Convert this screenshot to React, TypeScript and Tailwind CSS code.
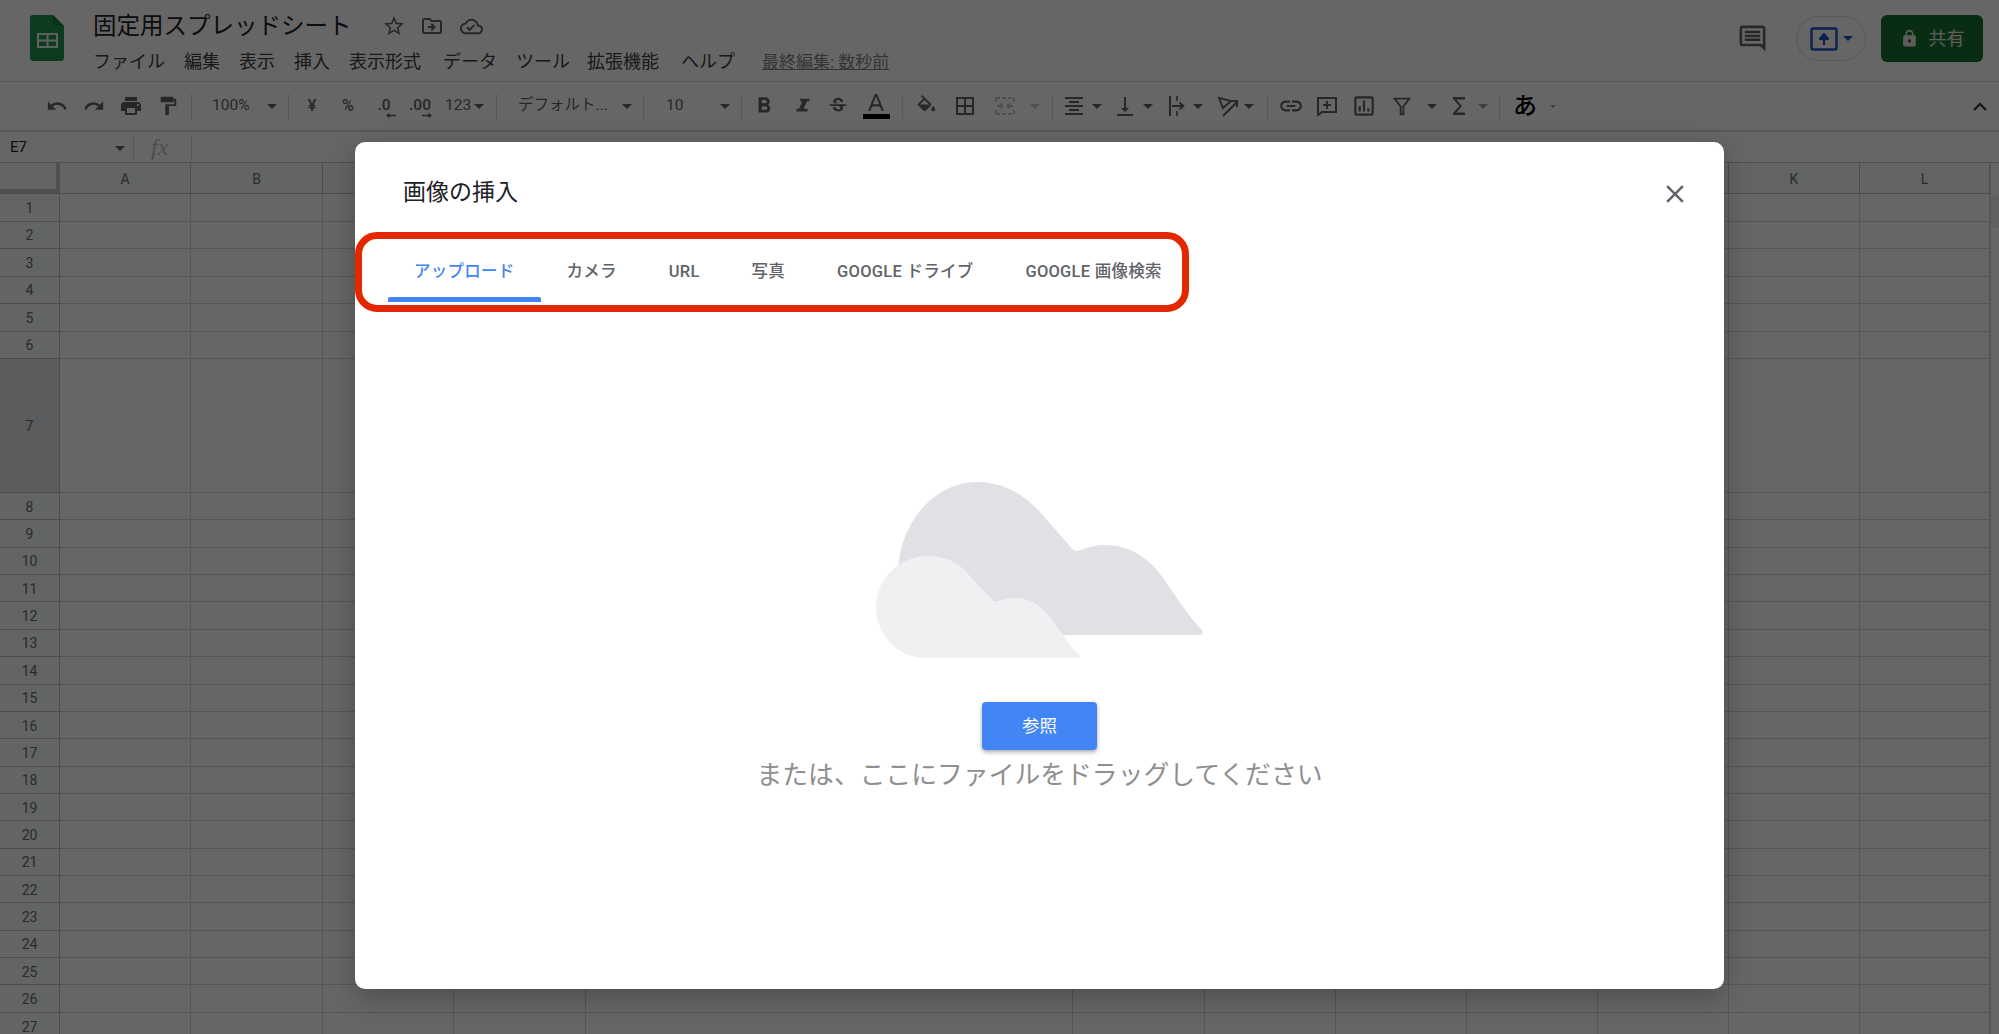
const P = {
  undo: 'M12.5 8c-2.65 0-5.05.99-6.9 2.6L2 7v9h9l-3.62-3.62c1.39-1.16 3.16-1.88 5.12-1.88 3.54 0 6.55 2.31 7.6 5.5l2.37-.78C21.08 11.03 17.15 8 12.5 8z',
  redo: 'M18.4 10.6C16.55 8.99 14.15 8 11.5 8c-4.65 0-8.58 3.03-9.96 7.22L3.9 16c1.05-3.19 4.05-5.5 7.6-5.5 1.95 0 3.73.72 5.12 1.88L13 16h9V7l-3.6 3.6z',
  print: 'M19 8H5c-1.66 0-3 1.34-3 3v6h4v4h12v-4h4v-6c0-1.66-1.34-3-3-3zm-3 11H8v-5h8v5zm3-7c-.55 0-1-.45-1-1s.45-1 1-1 1 .45 1 1-.45 1-1 1zm-1-9H6v4h12V3z',
  paint: 'M18 4V3c0-.55-.45-1-1-1H5c-.55 0-1 .45-1 1v4c0 .55.45 1 1 1h12c.55 0 1-.45 1-1V6h1v4H9v11c0 .55.45 1 1 1h2c.55 0 1-.45 1-1v-9h8V4h-3z',
  bold: 'M15.6 10.79c.97-.67 1.65-1.77 1.65-2.79 0-2.26-1.75-4-4-4H7v14h7.04c2.09 0 3.71-1.7 3.71-3.79 0-1.52-.86-2.82-2.15-3.42zM10 6.5h3c.83 0 1.5.67 1.5 1.5s-.67 1.5-1.5 1.5h-3v-3zm3.5 9H10v-3h3.5c.83 0 1.5.67 1.5 1.5s-.67 1.5-1.5 1.5z',
  italic: 'M10 4v3h2.21l-3.42 8H6v3h12v-3h-4.21l3.42-8H20V4z',
  strike: 'M6.85 7.08C6.85 4.37 9.45 3 12.24 3c1.64 0 3 .49 3.9 1.28.77.65 1.46 1.73 1.46 3.24h-3.01c0-.31-.05-.59-.15-.85-.29-.86-1.2-1.28-2.25-1.28-1.86 0-2.34 1.02-2.34 1.7 0 .48.25.88.74 1.21.38.25.77.48 1.41.7H7.39c-.21-.34-.54-.89-.54-1.92zM21 12v-2H3v2h9.62c1.15.45 1.96.75 1.96 1.97 0 1-.81 1.67-2.28 1.67-1.54 0-2.93-.54-2.93-2.51H6.4c0 .55.08 1.13.24 1.58.81 2.29 3.29 3.3 5.67 3.3 2.27 0 5.3-.89 5.3-4.05 0-.3-.01-1.16-.48-1.96H21z',
  fill: 'M16.56 8.94L7.62 0 6.21 1.41l2.38 2.38-5.15 5.15c-.59.59-.59 1.54 0 2.12l5.5 5.5c.29.29.68.44 1.06.44s.77-.15 1.06-.44l5.5-5.5c.59-.58.59-1.53 0-2.12zM5.21 10L10 5.21 14.79 10H5.21zM19 11.5s-2 2.17-2 3.5c0 1.1.9 2 2 2s2-.9 2-2c0-1.33-2-3.5-2-3.5z',
  borders: 'M3 3v18h18V3H3zm8 16H5v-6h6v6zm0-8H5V5h6v6zm8 8h-6v-6h6v6zm0-8h-6V5h6v6z',
  align: 'M7 15v2h10v-2H7zm-4 6h18v-2H3v2zm0-8h18v-2H3v2zm4-6v2h10V7H7zM3 3v2h18V3H3z',
  valign: 'M13 3h-2v11H8l4 4 4-4h-3zM4 20v2h16v-2H4z',
  link: 'M3.9 12c0-1.71 1.39-3.1 3.1-3.1h4V7H7c-2.76 0-5 2.24-5 5s2.24 5 5 5h4v-1.9H7c-1.71 0-3.1-1.39-3.1-3.1zM8 13h8v-2H8v2zm9-6h-4v1.9h4c1.71 0 3.1 1.39 3.1 3.1s-1.39 3.1-3.1 3.1h-4V17h4c2.76 0 5-2.24 5-5s-2.24-5-5-5z',
  chart: 'M19 3H5c-1.1 0-2 .9-2 2v14c0 1.1.9 2 2 2h14c1.1 0 2-.9 2-2V5c0-1.1-.9-2-2-2zm0 16H5V5h14v14zM7 12h2v5H7zm4-5h2v10h-2zm4 7h2v3h-2z',
  sigma: 'M18 3H6v2l6.5 7L6 19v2h12v-2.5H9.5l5.5-6.5-5.5-6.5H18z',
  star: 'M22 9.24l-7.19-.62L12 2 9.19 8.63 2 9.24l5.46 4.73L5.82 21 12 17.27 18.18 21l-1.63-7.03L22 9.24zM12 15.4l-3.76 2.27 1-4.28-3.32-2.88 4.38-.38L12 6.1l1.71 4.04 4.38.38-3.32 2.88 1 4.28L12 15.4z',
  folder: 'M20 6h-8l-2-2H4c-1.1 0-2 .9-2 2v12c0 1.1.9 2 2 2h16c1.1 0 2-.9 2-2V8c0-1.1-.9-2-2-2zm0 12H4V6h5.17l2 2H20v10zm-8.01-9l-1.41 1.41L12.16 12H8v2h4.16l-1.59 1.59L11.99 17 16 13.01 11.99 9z',
  cloud: 'M19.35 10.04C18.67 6.59 15.64 4 12 4 9.11 4 6.6 5.64 5.35 8.04 2.34 8.36 0 10.91 0 14c0 3.31 2.69 6 6 6h13c2.76 0 5-2.24 5-5 0-2.64-2.05-4.78-4.65-4.96zM19 18H6c-2.21 0-4-1.79-4-4s1.79-4 4-4h.71C7.37 7.69 9.48 6 12 6c3.04 0 5.5 2.46 5.5 5.5v.5H19c1.66 0 3 1.34 3 3s-1.34 3-3 3zm-9-3.82l-2.09-2.09L6.5 13.5 10 17l6.01-6.01-1.41-1.41z',
  comment: 'M21.99 4c0-1.1-.89-2-1.99-2H4c-1.1 0-2 .9-2 2v12c0 1.1.9 2 2 2h14l4 4-.01-18zM20 4v13.17L18.83 16H4V4h16zM6 12h12v2H6zm0-3h12v2H6zm0-3h12v2H6z',
  lock: 'M18 8h-1V6c0-2.76-2.24-5-5-5S7 3.24 7 6v2H6c-1.1 0-2 .9-2 2v10c0 1.1.9 2 2 2h12c1.1 0 2-.9 2-2V10c0-1.1-.9-2-2-2zm-6 9c-1.1 0-2-.9-2-2s.9-2 2-2 2 .9 2 2-.9 2-2 2zM9 8V6c0-1.66 1.34-3 3-3s3 1.34 3 3v2H9z',
  close: 'M19 6.41L17.59 5 12 10.59 6.41 5 5 6.41 10.59 12 5 17.59 6.41 19 12 13.41 17.59 19 19 17.59 13.41 12z',
};

function Icon({ d, size = 24, className = '' }: { d: string; size?: number; className?: string }) {
  return (
    <svg width={size} height={size} viewBox="0 0 24 24" fill="currentColor" className={className}>
      <path d={d} />
    </svg>
  );
}

function Caret({ className = 'text-[#5f6368]' }: { className?: string }) {
  return (
    <svg width="10" height="5" viewBox="0 0 10 5" fill="currentColor" className={className}>
      <path d="M0 0h10L5 5z" />
    </svg>
  );
}

function Cell({ w, className = '', children }: { w: string; className?: string; children?: React.ReactNode }) {
  return <div className={`flex shrink-0 items-center justify-center ${w} ${className}`}>{children}</div>;
}

function Sep({ className = '' }: { className?: string }) {
  return <div className={`h-[25px] w-px shrink-0 bg-[#dadce0] ${className}`} />;
}

function Line({ children, size = 24 }: { children: React.ReactNode; size?: number }) {
  return (
    <svg width={size} height={size} viewBox="0 0 24 24" fill="none" stroke="currentColor" strokeWidth="2">
      {children}
    </svg>
  );
}

const menus = [
  { label: 'ファイル', cls: '' },
  { label: '編集', cls: '' },
  { label: '表示', cls: '' },
  { label: '挿入', cls: '' },
  { label: '表示形式', cls: '' },
  { label: 'データ', cls: 'ml-[3px]' },
  { label: 'ツール', cls: '' },
  { label: '拡張機能', cls: '-ml-[2px]' },
  { label: 'ヘルプ', cls: 'ml-[3px]' },
];

function TopBar() {
  return (
    <header className="flex h-[82px] shrink-0 border-b border-[#dadce0] bg-white">
      <svg width="34" height="46" viewBox="0 0 34 46" className="ml-[30px] mt-[15px] shrink-0">
        <path d="M3 0h20l11 11v32a3 3 0 0 1-3 3H3a3 3 0 0 1-3-3V3a3 3 0 0 1 3-3z" fill="#1f9650" />
        <path d="M23 0l11 11H25a2 2 0 0 1-2-2z" fill="#17803f" />
        <path d="M7 18h21v15H7zm2 2v4.5h7.5V20zm9.5 0v4.5H26V20zM9 26.5V31h7.5v-4.5zm9.5 0V31H26v-4.5z" fill="#f1f1f1" fillRule="evenodd" />
      </svg>
      <div className="ml-[29px] flex flex-col">
        <div className="mt-[10px] flex h-[32px] items-center">
          <span className="text-[23.5px] leading-[32px] text-[#202124]">固定用スプレッドシート</span>
          <Icon d={P.star} className="ml-[30px] text-[#5f6368]" />
          <Icon d={P.folder} className="ml-[14px] text-[#5f6368]" />
          <Icon d={P.cloud} size={23} className="ml-[16px] text-[#5f6368]" />
        </div>
        <nav className="mt-[7px] flex h-[26px] items-center gap-[19px] text-[18px] leading-[26px] text-[#3c4043]">
          {menus.map((m) => (
            <span key={m.label} className={m.cls}>{m.label}</span>
          ))}
          <span className="ml-[8px] text-[17px] text-[#80868b] underline">最終編集: 数秒前</span>
        </nav>
      </div>
      <div className="ml-auto mr-[16px] mt-[15px] flex h-[47px] items-center">
        <Icon d={P.comment} size={31} className="text-[#5f6368]" />
        <div className="ml-[28px] flex h-[45px] w-[70px] items-center justify-center gap-[5px] rounded-full border border-[#dadce0]">
          <svg width="28" height="24" viewBox="0 0 28 24" fill="none" className="text-[#1a56c4]">
            <rect x="1.5" y="1.5" width="25" height="21" rx="1.5" stroke="currentColor" strokeWidth="2.4" />
            <path d="M14 18v-7m-4 1 4-5 4 5z" stroke="currentColor" strokeWidth="2.2" fill="currentColor" strokeLinejoin="round" />
          </svg>
          <Caret className="text-[#1a56c4]" />
        </div>
        <button className="ml-[15px] flex h-[47px] w-[102px] items-center justify-center gap-[10px] rounded-[6px] bg-[#17702f] text-[18px] text-[#e8e8e8]">
          <Icon d={P.lock} size={19} />
          共有
        </button>
      </div>
    </header>
  );
}

function Toolbar() {
  const ic = 'text-[#5f6368]';
  return (
    <div className="flex h-[50px] shrink-0 items-center border-b-2 border-[#dadce0] bg-white pl-[38px] text-[15.5px] text-[#5f6368]">
      <Cell w="w-[37px]"><Icon d={P.undo} size={22} className={ic} /></Cell>
      <Cell w="w-[37px]"><Icon d={P.redo} size={22} className={ic} /></Cell>
      <Cell w="w-[37px]"><Icon d={P.print} size={24} className={ic} /></Cell>
      <Cell w="w-[37px]"><Icon d={P.paint} size={22} className={ic} /></Cell>
      <Sep className="ml-[5px]" />
      <div className="flex w-[96px] shrink-0 items-center justify-between pl-[20px] pr-[11px]"><span>100%</span><Caret /></div>
      <Sep />
      <Cell w="w-[36px] ml-[5px]"><span className="text-[16px] font-medium">¥</span></Cell>
      <Cell w="w-[36px]"><span className="text-[16px] font-medium">%</span></Cell>
      <Cell w="w-[36px]">
        <div className="mt-[4px] flex flex-col items-center leading-[14px]">
          <span className="font-medium">.0</span>
          <svg width="10" height="7" viewBox="0 0 14 8" fill="currentColor" className="ml-[14px]"><path d="M0 4l5-4v3h9v2H5v3z" /></svg>
        </div>
      </Cell>
      <Cell w="w-[36px]">
        <div className="mt-[4px] flex flex-col items-center leading-[14px]">
          <span className="font-medium">.00</span>
          <svg width="10" height="7" viewBox="0 0 14 8" fill="currentColor" className="ml-[14px]"><path d="M14 4L9 0v3H0v2h9v3z" /></svg>
        </div>
      </Cell>
      <div className="flex w-[58px] shrink-0 items-center gap-[3px] pl-[7px]"><span>123</span><Caret /></div>
      <Sep />
      <div className="flex w-[146px] shrink-0 items-center justify-between pl-[21px] pr-[11px]"><span>デフォルト...</span><Caret /></div>
      <Sep />
      <div className="flex w-[97px] shrink-0 items-center justify-between pl-[22px] pr-[11px]"><span>10</span><Caret /></div>
      <Sep />
      <Cell w="w-[38px] ml-[3px]"><Icon d={P.bold} size={26} className={ic} /></Cell>
      <Cell w="w-[38px]"><Icon d={P.italic} size={22} className={ic} /></Cell>
      <Cell w="w-[33px]"><Icon d={P.strike} size={22} className={ic} /></Cell>
      <Cell w="w-[44px]">
        <div className="flex flex-col items-center">
          <svg width="22" height="20" viewBox="0 0 22 20" fill="currentColor" className={ic}>
            <path d="M9.8 1h2.4L19 18h-2.4l-1.7-4.6H7.1L5.4 18H3L9.8 1zM7.9 11.3h6.2L11 3.6z" />
          </svg>
          <div className="mt-[1px] h-[5px] w-[27px] bg-black" />
        </div>
      </Cell>
      <Sep className="ml-[4px]" />
      <Cell w="w-[38px] ml-[4px]"><Icon d={P.fill} size={23} className={ic} /></Cell>
      <Cell w="w-[40px]"><Icon d={P.borders} size={24} className={ic} /></Cell>
      <Cell w="w-[40px]">
        <svg width="24" height="24" viewBox="0 0 24 24" fill="none" stroke="#c6c8cb" strokeWidth="2">
          <path d="M3 4h18M3 20h18M3 4v4M21 4v4M3 16v4M21 16v4" strokeDasharray="4 2" />
          <path d="M4 12h5m-2-2.5 2.5 2.5L7 14.5M20 12h-5m2-2.5L14.5 12l2.5 2.5" />
        </svg>
      </Cell>
      <Cell w="w-[20px]"><Caret className="text-[#c6c8cb]" /></Cell>
      <Sep className="ml-[7px]" />
      <Cell w="w-[24px] ml-[9px]"><Icon d={P.align} size={24} className={ic} /></Cell>
      <Cell w="w-[22px]"><Caret /></Cell>
      <Cell w="w-[34px]"><Icon d={P.valign} size={24} className={ic} /></Cell>
      <Cell w="w-[12px]"><Caret /></Cell>
      <Cell w="w-[26px] ml-[10px]">
        <span className={ic}>
          <Line>
            <path d="M5 2v20" />
            <path d="M12 2v5M12 17v5" strokeWidth="1.6" />
            <path d="M7 12h10M14.5 8.5 18.5 12l-4 3.5" strokeWidth="1.8" />
          </Line>
        </span>
      </Cell>
      <Cell w="w-[16px]"><Caret /></Cell>
      <Cell w="w-[24px] ml-[10px]">
        <span className={ic}>
          <Line>
            <path d="M3 4l12 3-8 7z" />
            <path d="M7 22L21 8M15 7h6v6" />
          </Line>
        </span>
      </Cell>
      <Cell w="w-[18px]"><Caret /></Cell>
      <Sep className="ml-[9px]" />
      <Cell w="w-[36px] ml-[5px]"><Icon d={P.link} size={26} className={ic} /></Cell>
      <Cell w="w-[36px]">
        <span className={ic}>
          <Line>
            <path d="M3 4h18v14H7l-4 3z" />
            <path d="M12 7v8M8 11h8" />
          </Line>
        </span>
      </Cell>
      <Cell w="w-[38px]"><Icon d={P.chart} size={26} className={ic} /></Cell>
      <Cell w="w-[38px]">
        <span className={ic}>
          <Line size={22}>
            <path d="M4 4h16l-6.5 8.5V21h-3v-8.5z" />
          </Line>
        </span>
      </Cell>
      <Cell w="w-[22px]"><Caret /></Cell>
      <Cell w="w-[32px]"><Icon d={P.sigma} size={24} className={ic} /></Cell>
      <Cell w="w-[16px]"><Caret className="text-[#9aa0a6]" /></Cell>
      <Sep className="ml-[8px]" />
      <Cell w="w-[50px]"><span className="text-[24px] font-medium text-black">あ</span></Cell>
      <Cell w="w-[6px]"><Caret className="text-[#9aa0a6]" /></Cell>
      <Cell w="w-[24px] ml-auto mr-[7px]">
        <svg width="18" height="12" viewBox="0 0 18 12" fill="none" stroke="#3c4043" strokeWidth="2.4"><path d="M3 10l6-6 6 6" /></svg>
      </Cell>
    </div>
  );
}

function FormulaBar() {
  return (
    <div className="flex h-[31px] shrink-0 items-center border-b border-[#c7c9cc] bg-white">
      <div className="flex w-[133px] items-center pl-[10px] pr-[8px] text-[15px] text-[#202124]">
        <span>E7</span>
        <Caret className="ml-auto mt-[3px] text-[#5f6368]" />
      </div>
      <Sep />
      <span className="ml-[17px] w-[40px] font-['Liberation_Serif',serif] text-[24px] italic leading-none text-[#bdc1c6]">fx</span>
      <Sep />
    </div>
  );
}

const cols = ['A', 'B', 'C', 'D', 'E', 'F', 'G', 'H', 'I', 'J', 'K', 'L'];
const rows = Array.from({ length: 27 }, (_, i) => i + 1);

function Grid() {
  const line = 'border-b border-r border-[#d6d7d7]';
  const head = 'flex items-center justify-center border-b border-r border-[#bfc1c3] pt-[2px] text-[#6a6d71]';
  return (
    <div className="flex min-h-0 flex-1 overflow-hidden bg-white">
      <div className="grid flex-1 grid-cols-[60px_131px_132px_131px_132px_487px_132px_131px_131px_131px_131px_131px_130px] grid-rows-[31px_repeat(6,27.5px)_134px_repeat(20,27.37px)] text-[14px]">
        <div className="border-b-[5px] border-r-[4px] border-[#c4c6c8] bg-[#f8f9fa]" />
        {cols.map((c) => (
          <div key={c} className={`${head} bg-[#f8f9fa]`}>{c}</div>
        ))}
        {rows.flatMap((r) => [
          <div key={r} className={`${head} ${r === 7 ? 'bg-[#e3e6ea]' : 'bg-[#f8f9fa]'}`}>{r}</div>,
          ...cols.map((c) => <div key={c + r} className={line} />),
        ])}
      </div>
      <div className="w-[9px] shrink-0 border-l border-[#d6d7d7] bg-white pt-[32px]">
        <div className="h-[33px] w-[8px] rounded-l-[4px] bg-[#f1f1f1]" />
      </div>
    </div>
  );
}

const tabs = ['アップロード', 'カメラ', 'URL', '写真', 'GOOGLE ドライブ', 'GOOGLE 画像検索'];

function InsertDialog() {
  return (
    <div className="absolute left-[355px] top-[142px] flex h-[847px] w-[1369px] flex-col rounded-[10px] bg-white shadow-[0_8px_28px_rgba(0,0,0,0.25)]">
      <div className="flex h-[100px] shrink-0 items-center justify-between pl-[48px] pr-[34px] pt-[3px]">
        <h2 className="text-[23px] font-normal text-[#202124]">画像の挿入</h2>
        <Icon d={P.close} size={30} className="text-[#5f6368]" />
      </div>
      <div className="ml-[33px] flex h-[60px] shrink-0 items-center text-[16.5px] font-medium tracking-[0.25px] text-[#5f6368]">
        {tabs.map((t, i) => (
          <div key={t} className={`relative flex h-full items-center px-[26px] ${i === 0 ? 'text-[#4285f4]' : ''}`}>
            {t}
            {i === 0 && <div className="absolute bottom-0 left-0 right-0 h-[5px] rounded-t-[2px] bg-[#4285f4]" />}
          </div>
        ))}
      </div>
      <div className="flex flex-1 flex-col items-center pt-[180px]">
        <svg width="328" height="176" viewBox="876 482 328 176">
          <path
            d="M898 575C898 523 935 482 977 482C1003 482 1025 495 1040 512L1069 545C1073 551 1076 552 1081 550C1088 547 1096 545 1105 545C1130 545 1150 558 1166 582C1180 603 1192 620 1202 630Q1204 635 1198 635L930 635Z"
            fill="#dfe1e5"
          />
          <path
            d="M926 658C898 658 876 635 876 607C876 578 900 556 928 556C945 556 960 563 969 575L991 598C994 602 996 602 999 601C1004 599 1009 598 1015 598C1032 598 1044 608 1054 622C1064 637 1072 648 1080 656L1080 658Z"
            fill="#eff0f2"
          />
        </svg>
        <button className="mt-[44px] h-[48px] w-[115px] rounded-[4px] bg-[#4285f4] text-[17.5px] text-white shadow-[0_2px_4px_rgba(0,0,0,0.35)]">
          参照
        </button>
        <p className="mt-[7px] text-[25.8px] leading-[36px] text-[#8f8f8f]">または、ここにファイルをドラッグしてください</p>
      </div>
      <div className="absolute left-0 top-[90px] h-[80px] w-[834px] rounded-[22px] border-[7px] border-[#e32800]" />
    </div>
  );
}

export default function App() {
  return (
    <div className="relative flex h-screen w-screen flex-col overflow-hidden font-['Roboto','Noto_Sans_CJK_JP',sans-serif]">
      <TopBar />
      <Toolbar />
      <FormulaBar />
      <Grid />
      <div className="absolute inset-0 bg-black/60" />
      <InsertDialog />
    </div>
  );
}
